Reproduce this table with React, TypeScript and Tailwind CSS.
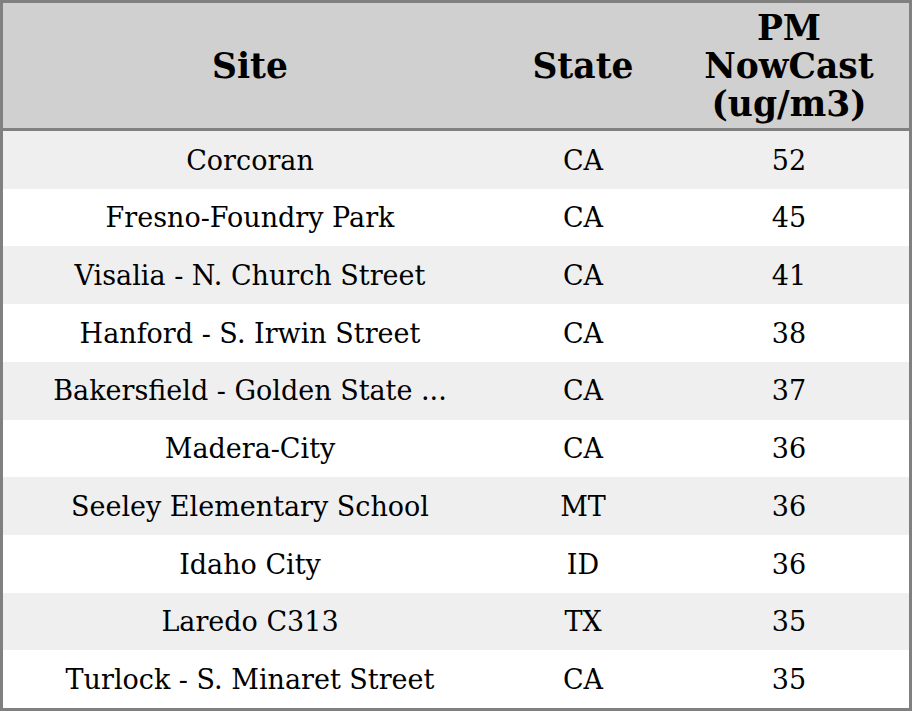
const rows: [string, string, string][] = [
  ["Corcoran", "CA", "52"],
  ["Fresno-Foundry Park", "CA", "45"],
  ["Visalia - N. Church Street", "CA", "41"],
  ["Hanford - S. Irwin Street", "CA", "38"],
  ["Bakersfield - Golden State ...", "CA", "37"],
  ["Madera-City", "CA", "36"],
  ["Seeley Elementary School", "MT", "36"],
  ["Idaho City", "ID", "36"],
  ["Laredo C313", "TX", "35"],
  ["Turlock - S. Minaret Street", "CA", "35"],
];

export default function App() {
  return (
    <div className="h-[711px] w-[912px] border-[3px] border-[#808080] bg-white font-['DejaVu_Serif',serif] text-black">
      <div className="grid h-[128px] grid-cols-[494px_172px_240px] items-center border-b-[3px] border-[#808080] bg-[#d0d0d0] text-center text-[34.5px] font-bold leading-[38px]">
        <div>Site</div>
        <div>State</div>
        <div>
          PM
          <br />
          NowCast
          <br />
          (ug/m3)
        </div>
      </div>
      <div className="flex h-[577px] flex-col">
        {rows.map(([site, state, pm], i) => (
          <div
            key={site}
            className={`grid flex-1 grid-cols-[494px_172px_240px] items-center pt-[2px] text-center text-[27px] ${
              i % 2 === 0 ? "bg-[#efefef]" : "bg-white"
            }`}
          >
            <div>{site}</div>
            <div>{state}</div>
            <div>{pm}</div>
          </div>
        ))}
      </div>
    </div>
  );
}
